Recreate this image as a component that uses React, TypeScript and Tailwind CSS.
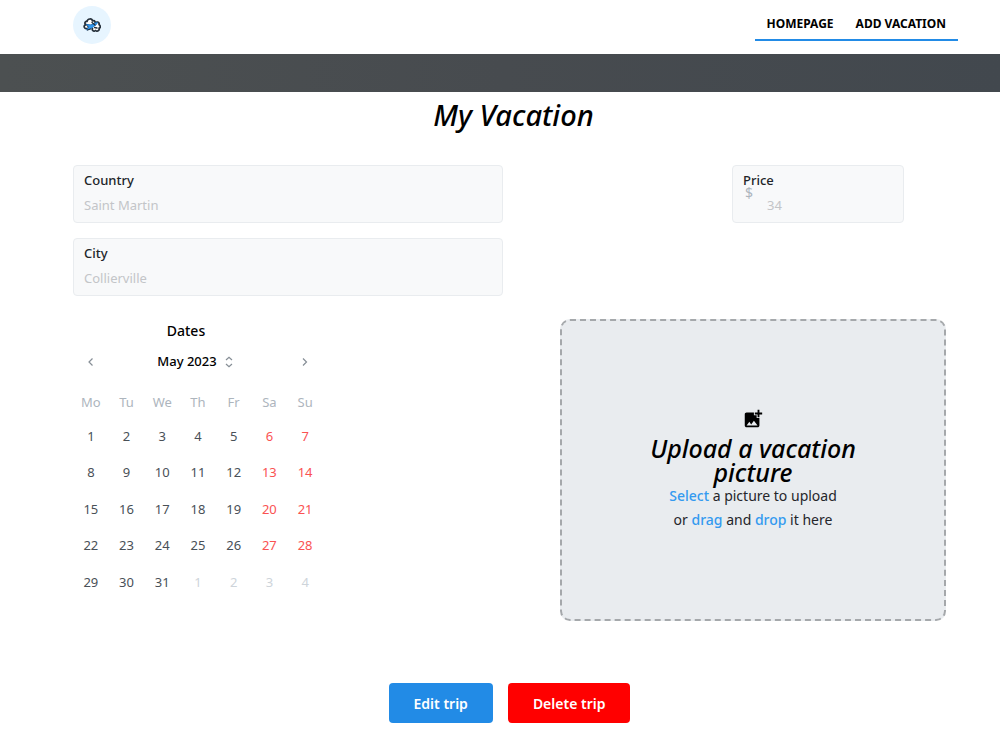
import { clsx } from "clsx";
import { useState } from "react";
import { MdAddPhotoAlternate } from "react-icons/md";

const navLinks = [
  { label: "Homepage", href: "#home" },
  { label: "Add vacation", href: "#add" },
];

const weekdays = ["Mo", "Tu", "We", "Th", "Fr", "Sa", "Su"];

const weeks = [
  [1, 2, 3, 4, 5, 6, 7],
  [8, 9, 10, 11, 12, 13, 14],
  [15, 16, 17, 18, 19, 20, 21],
  [22, 23, 24, 25, 26, 27, 28],
  [29, 30, 31, 1, 2, 3, 4],
];

const scriptFont =
  "font-['Lucida_Handwriting','Noto_Sans',cursive] italic font-medium";

function Logo() {
  return (
    <a
      href="#home"
      aria-label="Vacations"
      className="flex size-[38px] items-center justify-center rounded-full bg-[#e7f5ff]"
    >
      <svg viewBox="0 0 36 28" className="h-[14px] w-[18px]" fill="none">
        <g
          fill="#fff"
          stroke="#25303b"
          strokeWidth="3.4"
          strokeLinejoin="round"
        >
          <path d="M6 14C2 11 4 6 8 7C9 1 18 0 19 6C24 4 26 9 23 12L16 15Z" />
          <path d="M9 14C4 12 1 16 3 19C4 22 8 22 12 20Z" />
          <path d="M24 11C26 6 34 8 32 13C36 16 35 20 32 20C34 25 28 28 25 25C22 28 17 25 19 21L16 18Z" />
        </g>
        <path
          d="M7 13L16 14L24 10L29 9L27 13L20 18L14 22L7 24L12 18Z"
          fill="#339af0"
          stroke="#1c7ed6"
          strokeWidth="1.5"
        />
        <path
          d="M18 9L24 14M9 24L15 22M23 19L28 20"
          stroke="#25303b"
          strokeWidth="2.6"
          strokeLinecap="round"
        />
      </svg>
    </a>
  );
}

function Header() {
  return (
    <header className="flex h-[54px] items-start justify-between pl-[73px] pr-[42px] pt-[6px]">
      <Logo />
      <nav className="flex gap-[22px] border-b-2 border-[#228be6] px-3 pb-[7px] pt-[9px] text-[12px] font-bold uppercase leading-[17px] text-black">
        {navLinks.map((link) => (
          <a key={link.label} href={link.href}>
            {link.label}
          </a>
        ))}
      </nav>
    </header>
  );
}

type FieldProps = {
  id: string;
  label: string;
  placeholder: string;
  prefix?: string;
};

function Field({ id, label, placeholder, prefix }: FieldProps) {
  return (
    <div className="relative rounded-[4px] border border-[#e9ecef] bg-[#f8f9fa] px-[10px] pb-[7px] pt-[5px]">
      <label
        htmlFor={id}
        className="block text-[13px] font-medium leading-[18px] text-[#212529]"
      >
        {label}
      </label>
      {prefix && (
        <span className="absolute left-3 top-[19px] text-[14px] leading-4 text-[#adb5bd]">
          {prefix}
        </span>
      )}
      <input
        id={id}
        type="text"
        placeholder={placeholder}
        className={clsx(
          "mt-[6px] block h-5 w-full bg-transparent text-[13px] leading-5 text-[#212529] outline-none placeholder:text-[#c3c5c8]",
          prefix && "pl-6",
        )}
      />
    </div>
  );
}

function Chevron({ d }: { d: string }) {
  return (
    <svg viewBox="0 0 12 12" className="size-3" fill="none" stroke="#868e96">
      <path d={d} strokeWidth="1.2" />
    </svg>
  );
}

function Calendar() {
  const [selected, setSelected] = useState<string | null>(null);

  return (
    <div className="w-[250px]">
      <h2 className="pr-6 pt-px text-center text-[14px] font-medium leading-[22px] text-black">
        Dates
      </h2>
      <div className="mt-[2px] flex h-9 items-center justify-between">
        <button
          type="button"
          aria-label="Previous month"
          className="flex size-9 items-center justify-center"
        >
          <Chevron d="M7.5 2.5L4 6L7.5 9.5" />
        </button>
        <button
          type="button"
          className="flex items-center gap-[6px] pr-1 text-[13px] font-medium text-black"
        >
          May 2023
          <Chevron d="M3 4L6 1.2L9 4M3 8L6 10.8L9 8" />
        </button>
        <button
          type="button"
          aria-label="Next month"
          className="flex size-9 items-center justify-center"
        >
          <Chevron d="M4 2.5L7.5 6L4 9.5" />
        </button>
      </div>
      <table className="mt-2 h-[213px] w-full table-fixed text-center text-[13px]">
        <thead>
          <tr className="h-[30px]">
            {weekdays.map((day) => (
              <th key={day} scope="col" className="font-normal text-[#adb5bd]">
                {day}
              </th>
            ))}
          </tr>
        </thead>
        <tbody>
          {weeks.map((week, row) => (
            <tr key={row}>
              {week.map((day, col) => {
                const outside = row === 4 && day < 7;
                const key = `${row}-${col}`;
                return (
                  <td key={key}>
                    <button
                      type="button"
                      onClick={() => setSelected(key)}
                      className={clsx(
                        "h-8 w-full rounded-[4px]",
                        selected === key
                          ? "bg-[#228be6] text-white"
                          : outside
                            ? "text-[#ced4da]"
                            : col > 4
                              ? "text-[#fa5252]"
                              : "text-[#495057]",
                      )}
                    >
                      {day}
                    </button>
                  </td>
                );
              })}
            </tr>
          ))}
        </tbody>
      </table>
    </div>
  );
}

function Highlight({ children }: { children: string }) {
  return <span className="font-medium text-[#339af0]">{children}</span>;
}

function UploadArea() {
  return (
    <label className="flex h-[302px] cursor-pointer flex-col items-center justify-center rounded-[10px] border-2 border-dashed border-[#a5a8ab] bg-[#e9ecef] text-center">
      <input type="file" accept="image/*" className="sr-only" />
      <MdAddPhotoAlternate className="size-[22px] text-black" />
      <span
        className={clsx(
          scriptFont,
          "mt-[6px] w-[230px] text-[25px] leading-6 text-black",
        )}
      >
        Upload a vacation picture
      </span>
      <span className="text-[14px] leading-6 text-[#25262b]">
        <Highlight>Select</Highlight> a picture to upload
        <br />
        or <Highlight>drag</Highlight> and <Highlight>drop</Highlight> it here
      </span>
    </label>
  );
}

export default function App() {
  return (
    <div className="min-h-screen bg-white font-['Segoe_UI','Noto_Sans',sans-serif]">
      <Header />
      <div className="h-[38px] bg-linear-to-r from-[#4c5051] via-[#474b4f] to-[#42484e]" />

      <main className="pb-[27px] pl-[73px] pr-[54px]">
        <h1
          className={clsx(
            scriptFont,
            "pl-2 pt-[6px] text-center text-[29px] leading-[34px] text-black",
          )}
        >
          My Vacation
        </h1>

        <form onSubmit={(event) => event.preventDefault()}>
          <div className="mt-[33px] grid grid-cols-[430fr_386fr] gap-x-[57px]">
            <div className="flex flex-col gap-[15px]">
              <Field id="country" label="Country" placeholder="Saint Martin" />
              <Field id="city" label="City" placeholder="Collierville" />
            </div>
            <div className="flex items-start justify-end pr-[42px]">
              <div className="w-[172px]">
                <Field id="price" label="Price" placeholder="34" prefix="$" />
              </div>
            </div>
          </div>

          <div className="mt-[23px] grid grid-cols-[430fr_386fr] gap-x-[57px]">
            <Calendar />
            <UploadArea />
          </div>

          <div className="mt-[62px] flex justify-center gap-[15px] text-[14px] font-semibold text-white">
            <button
              type="submit"
              className="h-10 rounded-[4px] bg-[#228be6] px-[25px]"
            >
              Edit trip
            </button>
            <button
              type="button"
              className="h-10 rounded-[4px] bg-[#ff0000] px-[25px]"
            >
              Delete trip
            </button>
          </div>
        </form>
      </main>
    </div>
  );
}
